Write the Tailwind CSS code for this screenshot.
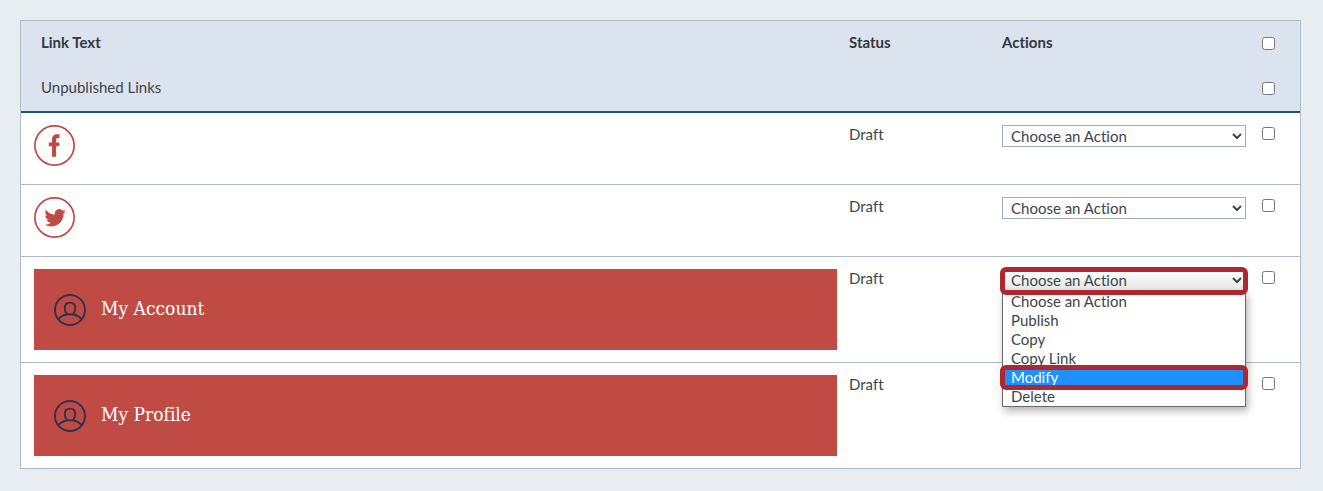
<!DOCTYPE html>
<html lang="en">
<head>
  <meta charset="UTF-8" />
  <meta name="viewport" content="width=device-width, initial-scale=1.0" />
  <title>Links</title>
  <script src="https://cdn.jsdelivr.net/npm/@tailwindcss/browser@4"></script>
</head>
<body class="bg-[#e8edf1] min-h-screen font-['Lato',sans-serif] [font-variant-ligatures:none] text-[15px] leading-[18px] text-[#3f444a]">

  <main class="pt-5 pl-5 pr-[22px] pb-5">
    <table class="w-full table-fixed border-separate border-spacing-0 border border-[#afbdcb] bg-white text-left">
      <colgroup>
        <col>
        <col class="w-[153px]">
        <col class="w-[256px]">
        <col class="w-12">
      </colgroup>

      <!-- HEADER -->
      <thead class="bg-[#dae3ee]">
        <tr class="h-[45px]">
          <th class="pl-5 pb-1 font-bold text-[#33383d]">Link Text</th>
          <th class="px-[6px] pb-1 font-bold text-[#33383d]">Status</th>
          <th class="px-[6px] pb-1 font-bold text-[#33383d]">Actions</th>
          <td class="pl-[10px]"><input type="checkbox" aria-label="Select all links" class="block size-[13px]"></td>
        </tr>
        <tr class="h-[47px]">
          <td colspan="3" class="pl-5 pb-1 border-b-2 border-[#1f5480]">Unpublished Links</td>
          <td class="pl-[10px] border-b-2 border-[#1f5480]"><input type="checkbox" aria-label="Select unpublished links" class="block size-[13px]"></td>
        </tr>
      </thead>

      <!-- LINKS -->
      <tbody class="align-top">
        <tr class="h-[72px]">
          <td class="pl-[13px] pt-3 border-b border-[#afbdcb]">
            <a href="#" class="inline-block" aria-label="Facebook">
              <svg class="block size-[41px]" viewBox="0 0 41 41" fill="none">
                <circle cx="20.5" cy="20.5" r="19.6" stroke="#c04b45" stroke-width="1.7" />
                <path fill="#c04b45" d="M18 31.8V21.2h-3.2v-3.8H18v-2.6c0-3.9 2-5.6 5.2-5.6h2.3v3.8h-1.4c-1.5 0-2 .7-2 2v2.4h3.3v3.8h-3.3v10.6z" />
              </svg>
            </a>
          </td>
          <td class="px-[6px] pt-3 border-b border-[#afbdcb]">Draft</td>
          <td class="px-[6px] pt-3 border-b border-[#afbdcb]">
            <select aria-label="Action for Facebook" class="block w-full h-[22px] pl-1 border border-[#a3adb6] bg-white">
              <option>Choose an Action</option>
              <option>Publish</option>
              <option>Copy</option>
              <option>Copy Link</option>
              <option>Modify</option>
              <option>Delete</option>
            </select>
          </td>
          <td class="pl-[10px] pt-[14px] border-b border-[#afbdcb]"><input type="checkbox" aria-label="Select Facebook" class="block size-[13px]"></td>
        </tr>

        <tr class="h-[72px]">
          <td class="pl-[13px] pt-3 border-b border-[#afbdcb]">
            <a href="#" class="inline-block" aria-label="Twitter">
              <svg class="block size-[41px]" viewBox="0 0 41 41" fill="none">
                <circle cx="20.5" cy="20.5" r="19.6" stroke="#c04b45" stroke-width="1.7" />
                <path fill="#c04b45" transform="translate(10.4 10.2) scale(.89)" d="M23.95 4.57a10 10 0 01-2.82.77 4.96 4.96 0 002.16-2.72c-.95.55-2 .95-3.13 1.18a4.92 4.92 0 00-8.38 4.48C7.69 8.09 4.07 6.13 1.64 3.16a4.82 4.82 0 00-.67 2.48c0 1.71.87 3.21 2.19 4.1a4.9 4.9 0 01-2.23-.62v.06a4.92 4.92 0 003.95 4.83 5 5 0 01-2.21.08 4.94 4.94 0 004.6 3.42A9.87 9.87 0 010 19.54a13.99 13.99 0 007.56 2.21c9.05 0 13.99-7.5 13.99-13.98 0-.21 0-.42-.02-.63a9.94 9.94 0 002.46-2.55z" />
              </svg>
            </a>
          </td>
          <td class="px-[6px] pt-3 border-b border-[#afbdcb]">Draft</td>
          <td class="px-[6px] pt-3 border-b border-[#afbdcb]">
            <select aria-label="Action for Twitter" class="block w-full h-[22px] pl-1 border border-[#a3adb6] bg-white">
              <option>Choose an Action</option>
              <option>Publish</option>
              <option>Copy</option>
              <option>Copy Link</option>
              <option>Modify</option>
              <option>Delete</option>
            </select>
          </td>
          <td class="pl-[10px] pt-[14px] border-b border-[#afbdcb]"><input type="checkbox" aria-label="Select Twitter" class="block size-[13px]"></td>
        </tr>

        <tr>
          <td class="pl-[13px] pr-[6px] py-3 border-b border-[#afbdcb]">
            <a href="#" class="flex items-center gap-[15px] h-[81px] px-5 bg-[#c04b45] text-white font-['DejaVu_Serif_Condensed','DejaVu_Serif',serif] text-[19px]">
              <svg class="size-8" viewBox="0 0 32 32" fill="none" stroke="#33304f" stroke-width="1.9">
                <circle cx="16" cy="16" r="15" />
                <path d="M13 20.2c-1.4-1.4-2.2-3.6-2.2-6.2 0-3.4 2-5.4 5.2-5.4s5.2 2 5.2 5.4c0 2.600-.8 4.800-2.200 6.200" />
                <path d="M4.400 25.200c2.600-3.400 7-5 11.600-5s9 1.600 11.600 5" />
              </svg>
              <span class="pb-1">My Account</span>
            </a>
          </td>
          <td class="px-[6px] pt-3 border-b border-[#afbdcb]">Draft</td>
          <td class="px-[6px] pt-3 border-b border-[#afbdcb]">
            <div class="relative">
              <select aria-label="Action for My Account" class="block w-full h-[22px] pl-1 border border-[#a3adb6] bg-linear-to-b from-white to-[#e6e6e6]">
                <option>Choose an Action</option>
                <option>Publish</option>
                <option>Copy</option>
                <option>Copy Link</option>
                <option>Modify</option>
                <option>Delete</option>
              </select>

              <!-- open option list -->
              <ul role="listbox" class="absolute top-[22px] inset-x-0 z-10 bg-white border border-[#666b70] shadow-[2px_4px_8px_rgba(0,0,0,0.3)] leading-[19px]">
                <li role="option" class="pl-2">Choose an Action</li>
                <li role="option" class="pl-2">Publish</li>
                <li role="option" class="pl-2">Copy</li>
                <li role="option" class="pl-2">Copy Link</li>
                <li role="option" aria-selected="true" class="relative pl-2 bg-[#1e90ff] text-white">
                  Modify
                  <span class="absolute -inset-x-[3px] -inset-y-[3px] border-[5px] border-[#ad2831] rounded-md"></span>
                </li>
                <li role="option" class="pl-2">Delete</li>
              </ul>
              <div class="absolute -inset-x-[2px] -top-[2px] h-7 z-20 border-[5px] border-[#ad2831] rounded-md pointer-events-none"></div>
            </div>
          </td>
          <td class="pl-[10px] pt-[14px] border-b border-[#afbdcb]"><input type="checkbox" aria-label="Select My Account" class="block size-[13px]"></td>
        </tr>

        <tr>
          <td class="pl-[13px] pr-[6px] py-3">
            <a href="#" class="flex items-center gap-[15px] h-[81px] px-5 bg-[#c04b45] text-white font-['DejaVu_Serif_Condensed','DejaVu_Serif',serif] text-[19px]">
              <svg class="size-8" viewBox="0 0 32 32" fill="none" stroke="#33304f" stroke-width="1.9">
                <circle cx="16" cy="16" r="15" />
                <path d="M13 20.2c-1.4-1.4-2.2-3.6-2.2-6.2 0-3.4 2-5.4 5.2-5.4s5.2 2 5.2 5.4c0 2.600-.8 4.800-2.200 6.200" />
                <path d="M4.400 25.200c2.600-3.400 7-5 11.600-5s9 1.600 11.600 5" />
              </svg>
              <span class="pb-1">My Profile</span>
            </a>
          </td>
          <td class="px-[6px] pt-3">Draft</td>
          <td></td>
          <td class="pl-[10px] pt-[14px]"><input type="checkbox" aria-label="Select My Profile" class="block size-[13px]"></td>
        </tr>
      </tbody>
    </table>
  </main>

</body>
</html>
